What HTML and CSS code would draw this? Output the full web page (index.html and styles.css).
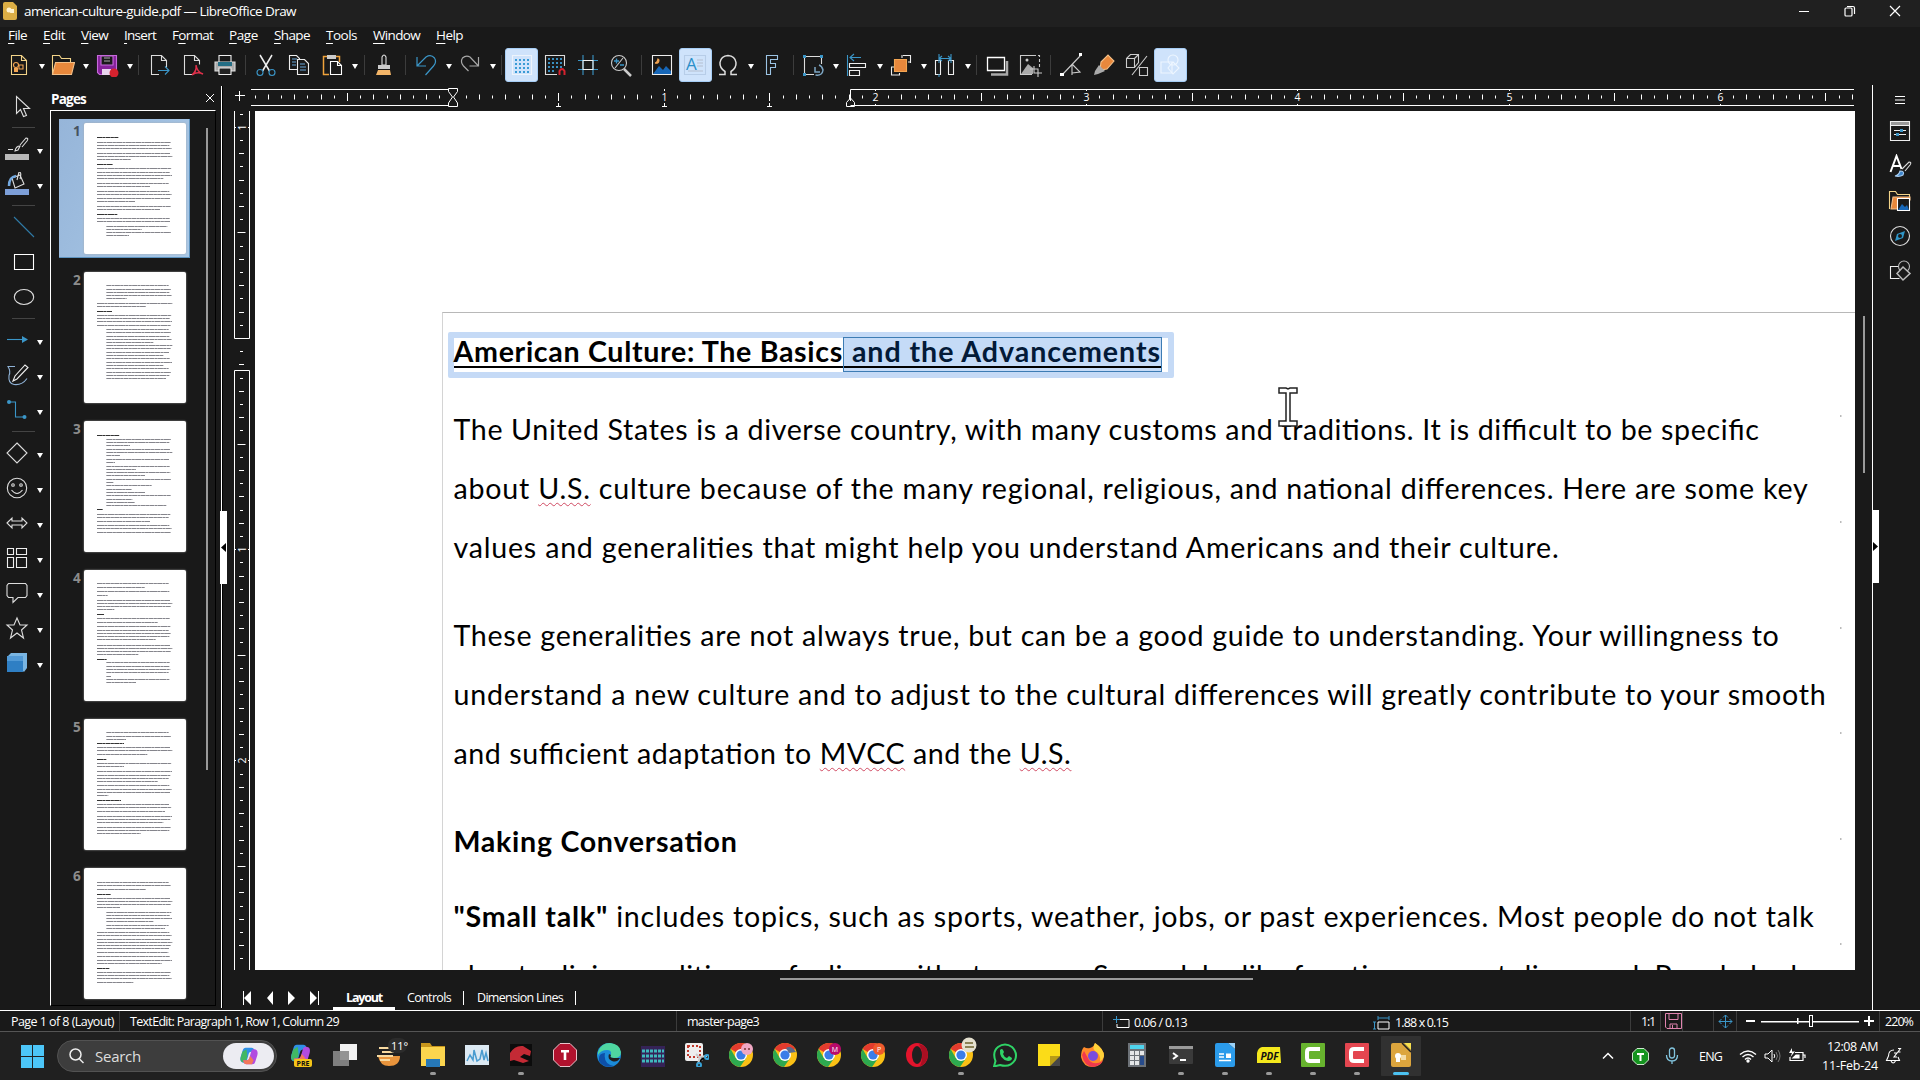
FILE: index.html
```html
<!DOCTYPE html>
<html lang="en">
<head>
<meta charset="utf-8">
<title>american-culture-guide.pdf — LibreOffice Draw</title>
<link rel="stylesheet" href="styles.css">
</head>
<body>
<svg class="defs" width="0" height="0">
  <symbol id="chrome" viewBox="0 0 24 24"><circle cx="12" cy="12" r="12" fill="#fbc116"/><path d="M12 12 1.6 6A12 12 0 0 1 22.4 6z" fill="#e33b2e"/><path d="M1.6 6A12 12 0 0 0 11 24L17.2 15 12 12 6.8 15z" fill="#2da94f"/><circle cx="12" cy="12" r="6" fill="#fff"/><circle cx="12" cy="12" r="4.6" fill="#3b7de8"/></symbol>
  <symbol id="copilot" viewBox="0 0 24 24"><path d="M8 2h7c2 0 3 1 3.500 3l.5 2h-4c-2 0-3 1-3.500 3L9.500 17c-.6 2-1.500 3-3.500 3C2 20 1 17 2 13L4.500 5C5.200 3 6 2 8 2z" fill="#2f8fe8"/><path d="M4 7 9 4l1 9-2 6c-4 2-7-1-6-5z" fill="#41b864"/><path d="M16 22H9c-2 0-3-1-3.500-3L5 17h4c2 0 3-1 3.500-3L14.500 7c.6-2 1.500-3 3.500-3 4 0 5 3 4 7l-2.500 8c-.7 2-1.500 3-3.500 3z" fill="#b14be0"/><path d="M5 17h4c2 0 3-1 3.500-3l1-2 4 5-2 5H9c-2 0-3-1-3.500-3z" fill="#f2775a"/></symbol>
</svg>

<header class="title"><svg width="15" height="20" viewBox="0 0 15 20"><path d="M2 1h8l4 4v12a2 2 0 0 1-2 2H2a2 2 0 0 1-2-2V3a2 2 0 0 1 2-2z" fill="#dcae45"/><circle cx="6" cy="9" r="2.500" fill="#fff3d0"/><path d="M8 8h3v4H7z" fill="#fff3d0"/></svg><span class="fit" data-w="272">american-culture-guide.pdf — LibreOffice Draw</span>
<svg class="winbtns" width="110" height="20" viewBox="0 0 110 20" fill="none" stroke="#fff" stroke-width="1.200"><path d="M3 10.500h10M94 5l10 10M104 5 94 15"/><rect x="49" y="7" width="7" height="8" rx="1"/><path d="M51 5.500h6q1.500 0 1.500 1.500v6"/></svg></header>

<nav class="menu"><span class="fit" data-w="19"><u>F</u>ile</span><span class="fit" data-w="22"><u>E</u>dit</span><span class="fit" data-w="27"><u>V</u>iew</span><span class="fit" data-w="32"><u>I</u>nsert</span><span class="fit" data-w="41">F<u>o</u>rmat</span><span class="fit" data-w="29"><u>P</u>age</span><span class="fit" data-w="36"><u>S</u>hape</span><span class="fit" data-w="31"><u>T</u>ools</span><span class="fit" data-w="47"><u>W</u>indow</span><span class="fit" data-w="27"><u>H</u>elp</span></nav>

<div class="tools">
 <i class="t"><svg viewBox="0 0 24 24"><path d="M4.500 2.500h10l5 5v14h-15z M14.500 2.500v5h5" stroke="#f3d489"/><circle cx="9" cy="12" r="2.500" stroke="#f3a552"/><path d="M12 12h4v4h-4z" stroke="#f3a552"/><path d="M7 19v-4h4v4z" fill="#f3a552" stroke="none"/></svg></i><i class="a"></i>
 <i class="t"><svg viewBox="0 0 24 24"><path d="M1.500 21V2.500h7l2 3h9v4" stroke="#f3d489"/><path d="M1.500 21.500 4.500 9.500h19l-3 12z" fill="#e8883c" stroke="#f3c089"/></svg></i><i class="a"></i>
 <i class="t"><svg viewBox="0 0 24 24"><path d="M2.500 2.500h19v19h-17l-2-2z" fill="#86229b" stroke="#c66adb"/><path d="M6 3h12v9H6z" fill="#1a1a1a" stroke="#c66adb"/><path d="M7 22v-6h9v6" fill="#e9d5ee" stroke="none"/><path d="M9 5h6M9 8h6" stroke="#aaa"/><circle cx="19" cy="20" r="4.500" fill="#d5222e" stroke="none"/></svg></i><i class="a"></i><i class="s"></i>
 <i class="t"><svg viewBox="0 0 24 24"><path d="M12 21.500H4.500v-19h10l5 5v7M14.500 2.500v5h5" stroke="#ddd"/><path d="M11 17.500h11M18 13.500l4 4-4 4" stroke="#3b96c8"/></svg></i>
 <i class="t"><svg viewBox="0 0 24 24"><path d="M12 21.500H4.500v-19h10l5 5v4M14.500 2.500v5h5" stroke="#ddd"/><path d="M12 22q5-4 4-10 1 7 7 9-6-3-11 1z" stroke="#e0304a" stroke-width="1.500"/></svg></i>
 <i class="t"><svg viewBox="0 0 24 24"><path d="M6 10V2.500h12V10" stroke="#eee"/><path d="M2 9h20v9H2z" fill="#aaa" stroke="#ddd"/><path d="M5 9h14v4H5z" fill="#246e85" stroke="none"/><path d="M6 15h12v6.500H6z" fill="#222" stroke="#eee"/></svg></i><i class="s"></i>
 <i class="t"><svg viewBox="0 0 24 24"><path d="M6 2 15.500 18M18 2 8.500 18" stroke="#eee" stroke-width="1.500"/><circle cx="6" cy="19.500" r="3" stroke="#3b96c8"/><circle cx="18" cy="19.500" r="3" stroke="#3b96c8"/></svg></i>
 <i class="t"><svg viewBox="0 0 24 24"><path d="M10 16.500H2.500v-14h7l3 3v2" stroke="#eee"/><path d="M10.500 6.500h7l4 4v11h-11z" fill="#1a1a1a" stroke="#eee"/><path d="M5 6h5M5 9h4M5 12h4M13 11h5M13 14h6M13 17h6" stroke="#68a5d8"/></svg></i>
 <i class="t"><svg viewBox="0 0 24 24"><path d="M9 21.500H3.500v-18h16V9" stroke="#f0a33c" stroke-width="1.500"/><path d="M7 2h9v4H7z" fill="#ccc" stroke="none"/><path d="M10.500 8.500h7l4 4v9h-11zM17.500 8.500v4h4" fill="#1a1a1a" stroke="#fff"/></svg></i><i class="a"></i><i class="s"></i>
 <i class="t"><svg viewBox="0 0 24 24"><path d="M10 12V4q2-4 4 0v8z" stroke="#ddd"/><path d="M6 12h12v4H6z" fill="#ccc" stroke="none"/><path d="M6 17h12l1 5H4z" fill="#f3b568" stroke="none"/></svg></i><i class="s"></i>
 <i class="t"><svg viewBox="0 0 24 24"><path d="M3 4v9h9M3.500 12.500 12 4q5-3 8.500 1 2.500 4-1 8l-8 9" stroke="#3b96c8" stroke-width="1.200"/></svg></i><i class="a"></i>
 <i class="t"><svg viewBox="0 0 24 24"><path d="M20.500 4v9h-9M20 12.500 12 4Q8 2 4.500 5q-2.500 4 1 8l5 5" stroke="#a8a8a8" stroke-width="1.200"/></svg></i><i class="a"></i><i class="s"></i>
 <i class="t on"><svg viewBox="0 0 24 24"><path d="M2.500 2.500h19v19h-19z" stroke="#eef4fb"/><path d="M5 7h15M5 11h15M5 15h15M5 19h15" stroke="#3a9bd5" stroke-width="2" stroke-dasharray="2 2"/></svg></i>
 <i class="t"><svg viewBox="0 0 24 24"><path d="M14 21.500H2.500v-19h19V13" stroke="#ddd"/><path d="M5 6h14M5 10h14M5 14h14M5 18h8" stroke="#3a8fc0" stroke-width="2" stroke-dasharray="2 2"/><path d="M16.500 22v-4q2.500-4 5 0v4" stroke="#d5222e" stroke-width="2"/></svg></i>
 <i class="t"><svg viewBox="0 0 24 24"><path d="M2 7.500h20M2 16.500h20M7 2v20M17 2v20" stroke="#3b96c8"/><path d="M7 7.500h10v9H7z" stroke="#eee"/></svg></i>
 <i class="t"><svg viewBox="0 0 24 24"><circle cx="10" cy="10" r="7.500" stroke="#ccc"/><path d="m15 16 7 7" stroke="#ccc" stroke-width="2.500"/><path d="M5 8h5M7.500 5.500v5M11 12h4" stroke="#3b96c8" stroke-width="1.400"/><path d="m14 5-8 10" stroke="#ccc"/></svg></i><i class="s"></i>
 <i class="t"><svg viewBox="0 0 24 24"><path d="M2.500 2.500h19v19h-19z" stroke="#eee"/><path d="m3 21 6-8 4 4 3-4 5 5v3z" fill="#1767b8" stroke="none"/><path d="M8 6q-1 4-3 4 4 1 4-3z" fill="#f3a552" stroke="#f3a552"/></svg></i>
 <i class="t on"><svg viewBox="0 0 24 24"><path d="M1.500 2.500h21v19h-21z" stroke="#b7cde8"/><path d="M14 7h6M14 10h6M14 13h6M5 18h15" stroke="#b5c0d0"/><text x="3" y="17" class="ico-a">A</text></svg></i>
 <i class="t"><svg viewBox="0 0 24 24"><path d="M3 21.500h6v-3Q3.500 15 4 9.500 5 3 12 2.500q7 .5 8 7 .5 5.500-5 9v3h6" stroke="#ddd" stroke-width="1.500"/></svg></i><i class="a"></i>
 <i class="t"><svg viewBox="0 0 24 24"><path d="M6.500 2.500h11v4h-7v4h5v4h-5v7h-4z" stroke="#9cc4e4"/></svg></i><i class="s"></i>
 <i class="t"><svg viewBox="0 0 24 24"><path d="M13 21.500H3.500v-18h17V11" stroke="#ddd"/><path d="M2 2h3v3H2zM19 2h3v3h-3zM2 20h3v3H2z" fill="#3b96c8" stroke="none"/><path d="M14 14v5h5M14.500 22q7 1 7.500-5-1-4-4-5" stroke="#7da6c4" stroke-width="1.500"/></svg></i><i class="a"></i>
 <i class="t"><svg viewBox="0 0 24 24"><path d="M2.500 2v21M5 4.500h11M9 1 5 4.500 9 8" stroke="#3b96c8"/><path d="M4.500 10.500h16v4h-16zM4.500 17.500h10v5h-10z" stroke="#eee"/></svg></i><i class="a"></i>
 <i class="t"><svg viewBox="0 0 24 24"><path d="M14 2.500h7.500V10M2.500 14v8h8V20M13 2v3M22 9h-3M2 14h3" stroke="#eee"/><path d="M5.500 6.500h12v12h-12z" fill="#e8883c" stroke="#f3a552"/></svg></i><i class="a"></i>
 <i class="t"><svg viewBox="0 0 24 24"><path d="M2.500 7.500h5v14h-5zM15.500 7.500h5v14h-5z" stroke="#eee"/><path d="M6 1v9M18 1v9M6 5.500h12M9 3 6 5.500 9 8M15 3l3 2.500L15 8M6 21v3" stroke="#3b96c8"/></svg></i><i class="a"></i><i class="s"></i>
 <i class="t"><svg viewBox="0 0 24 24"><path d="M22 8v13.500H6" stroke="#aaa" stroke-width="2.500"/><path d="M2.500 4.500h17v13h-17z" stroke="#fff" stroke-width="1.300"/></svg></i>
 <i class="t"><svg viewBox="0 0 24 24"><path d="M3 21.500h11M2.500 22V2.500H15" stroke="#ccc"/><path d="m3 21 7-10 5 4v6z" fill="#aaa" stroke="none"/><circle cx="9" cy="7" r="1.500" fill="#ccc" stroke="none"/><path d="M15 2.500h6.500V15" stroke="#ccc" stroke-dasharray="3 2"/><path d="M16 13v7h8M12 16h8v8" stroke="#ccc"/></svg></i><i class="s"></i>
 <i class="t"><svg viewBox="0 0 24 24"><path d="M3 22 22 2M13 11v11M13 11l8 8-8 1" stroke="#ccc"/><path d="M1 20h4v3H1zM20 0h3v3h-3z" fill="#fff" stroke="none"/></svg></i>
 <i class="t"><svg viewBox="0 0 24 24"><path d="m9 9 7-7 6 6-7 8-7 1z" fill="#e8883c" stroke="#f3c089"/><path d="m7 12 6 6-7 3-4 1 1-4z" fill="#aaa" stroke="none"/></svg></i>
 <i class="t"><svg viewBox="0 0 24 24"><path d="M1.500 5.500h8v9h-8zM1.500 5.500l4-4h8v8l-4 5M9.500 5.500l4-4M14.500 14.500h8v8h-8zM22 3 7 22" stroke="#ccc"/></svg></i>
 <i class="t on"><svg viewBox="0 0 24 24"><path d="M3 9h11v11H3z" stroke="#eef6ff"/><circle cx="15" cy="7" r="5" stroke="#eef6ff"/><path d="m15 9 6 6-6 6-5-6z" stroke="#eef6ff"/></svg></i>
</div>

<main class="work">
 <aside class="left">
  <i class="l ind sel-tool"><svg viewBox="0 0 24 24"><path d="M7.500 2.500v17l4-4 3 7 3-1-3-7h6z" stroke="#ddd"/></svg></i>
  <i class="hs"></i>
  <i class="l arr"><svg viewBox="0 0 24 24"><path d="M3 12.500h5M10 14q1-5 5-5l-2 4zM15 8l6-7q3 0 1 3l-5 6" stroke="#ddd"/><path d="M0 17h24v6H0z" fill="#b9b9b9" stroke="none"/></svg></i>
  <i class="l arr"><svg viewBox="0 0 24 24"><path d="m7 6 8-3 4 9-9 4zM12 8l2-8q3 0 1 7" stroke="#ddd"/><path d="M4 14q0-9 7-10" stroke="#73a9e0" stroke-width="2.500"/><path d="M0 17h24v6H0z" fill="#7d9fd8" stroke="none"/></svg></i>
  <i class="hs"></i>
  <i class="l ind"><svg viewBox="0 0 24 24"><path d="m2 2 20 20" stroke="#2f7ba8"/></svg></i>
  <i class="l ind"><svg viewBox="0 0 24 24"><path d="M2.500 4.500h19v15h-19z" stroke="#fff"/></svg></i>
  <i class="l ind"><svg viewBox="0 0 24 24"><ellipse cx="12" cy="12" rx="9.700" ry="7.500" stroke="#ddd"/></svg></i>
  <i class="hs"></i>
  <i class="l arr"><svg viewBox="0 0 24 24"><path d="M2 11.500h17" stroke="#3b96c8"/><path d="m17 8 6 3.500-6 3.500z" fill="#3b96c8" stroke="none"/></svg></i>
  <i class="l arr"><svg viewBox="0 0 24 24"><path d="M10 3.500H3q3 5 1 9-1 8 5 9 8 1 13-6" stroke="#8fb2d6"/><path d="m8 18 2-5L20 2l3 2.500L12 16z" stroke="#eee"/></svg></i>
  <i class="l arr"><svg viewBox="0 0 24 24"><path d="M4 4h6.500v15H19" stroke="#3b96c8"/><circle cx="4" cy="4" r="2" fill="#3b96c8" stroke="none"/><circle cx="19.500" cy="19" r="2" fill="#3b96c8" stroke="none"/></svg></i>
  <i class="hs"></i>
  <i class="l arr"><svg viewBox="0 0 24 24"><path d="m12 2 10 10-10 10L2 12z" stroke="#ddd"/></svg></i>
  <i class="l arr"><svg viewBox="0 0 24 24"><circle cx="12" cy="12" r="9.700" stroke="#ddd"/><circle cx="8" cy="9" r="1.300" stroke="#ddd"/><circle cx="16" cy="9" r="1.300" stroke="#ddd"/><path d="M6.500 14q5.500 7 11 0" stroke="#ddd"/></svg></i>
  <i class="l arr"><svg viewBox="0 0 24 24"><path d="m2 12 5-5v3h10V7l5 5-5 5v-3H7v3z" stroke="#ddd"/></svg></i>
  <i class="l arr"><svg viewBox="0 0 24 24"><path d="M2.500 2.500h6v6h-6zM11.500 2.500h10v6h-10zM2.500 11.500h6v10h-6zM11.500 11.500h10v10h-10z" stroke="#eee"/></svg></i>
  <i class="l arr"><svg viewBox="0 0 24 24"><path d="M3.500 2.500h17l1.500 2v10l-1.500 2H13l-5 5v-5H3.500l-1.500-2v-10z" stroke="#ddd"/></svg></i>
  <i class="l arr"><svg viewBox="0 0 24 24"><path d="m12 2 3 7h7l-5.500 5 2 8-6.500-5-6.500 5 2-8L2 9h7z" stroke="#ddd"/></svg></i>
  <i class="l arr"><svg viewBox="0 0 24 24"><path d="m2 6 4-4h16v15l-3 4z" fill="#79b5e2" stroke="none"/><path d="M2 5h16v16H2z" fill="#2f7fc4" stroke="none"/><path d="M2 5h16v5H2z" fill="#529ad6" stroke="none"/></svg></i>
 </aside>

 <section class="pages">
  <div class="pages-head"><b class="fit" data-w="35">Pages</b><svg width="10" height="10" viewBox="0 0 10 10" stroke="#fff"><path d="m1 1 8 8M9 1 1 9"/></svg></div>
  <div class="thumbs" id="thumbs"></div>
  <i class="psb"></i>
 </section>
 <div class="split"><i class="grip"><svg width="7" height="10" viewBox="0 0 7 10"><path d="M6 0v9L1 4.500z" fill="#000"/></svg></i></div>

 <section class="editor">
  <svg class="ruler-h" id="rh" width="1621" height="26"></svg>
  <div class="mid">
   <svg class="ruler-v" id="rv" width="22" height="859"></svg>
   <div class="canvas">
    <div class="paper">
     <div class="hbox"><h1><span class="fit" data-w="389.500">American Culture: The Basics</span><span class="sel"><span class="fit" data-w="317"> and the Advancements</span></span></h1></div>
     <p class="p1"><span class="fit" data-w="1306">The United States is a diverse country, with many customs and traditions. It is difficult to be specific</span></p>
     <p><span class="fit" data-w="1355">about <s>U.S.</s> culture because of the many regional, religious, and national differences. Here are some key</span></p>
     <p><span class="fit" data-w="1106">values and generalities that might help you understand Americans and their culture.</span></p>
     <p class="gap"><span class="fit" data-w="1326">These generalities are not always true, but can be a good guide to understanding. Your willingness to</span></p>
     <p><span class="fit" data-w="1373">understand a new culture and to adjust to the cultural differences will greatly contribute to your smooth</span></p>
     <p><span class="fit" data-w="618">and sufficient adaptation to <s>MVCC</s> and the <s>U.S.</s></span></p>
     <p class="gap"><b class="fit" data-w="284">Making Conversation</b></p>
     <p class="talk"><span class="fit" data-w="1361"><b>"Small talk"</b> includes topics, such as sports, weather, jobs, or past experiences. Most people do not talk</span></p>
     <p><span class="fit" data-w="1344">about religion, politics, or feelings with strangers. Second, be like function or most discussed. People had</span></p>
    </div>
    <svg class="dots" width="4" height="540" viewBox="0 0 4 540"><path d="M0 1h1.500M0 107h1.500M0 213h1.500M0 318h1.500M0 424h1.500M0 529h1.500" stroke="#777"/></svg>
    <svg class="beam" width="20" height="40" viewBox="0 0 20 40"><path d="M1 1h7l2 1 2-1h7v5h-7v28h7v5H1v-5h7V6H1z" fill="#fff" stroke="#222" stroke-width="1.500"/></svg>
   </div>
   <i class="vsb"></i>
  </div>
  <i class="hsb"></i>
  <div class="tabs">
   <svg width="80" height="16" viewBox="0 0 80 16" fill="#fff"><path d="M1 1h1v14H1zM9 1v14L2 8zM31 1v14l-6-7zM46 1v14l7-7zM68 1v14l7-7zM76 1h1v14h-1z"/></svg>
   <b class="tab"><span class="fit" data-w="36">Layout</span></b>
   <span class="tab2"><span class="fit" data-w="44">Controls</span></span>
   <span class="tab3"><span class="fit" data-w="86">Dimension Lines</span></span>
  </div>
 </section>
 <div class="split r"><i class="grip"><svg width="7" height="10" viewBox="0 0 7 10"><path d="M1 0v9l5-4.500z" fill="#000"/></svg></i></div>
 <aside class="right">
  <i><svg viewBox="0 0 24 24"><path d="M7 8.500h10M7 12h10M7 15.500h10" stroke="#fff"/></svg></i>
  <i><svg viewBox="0 0 24 24"><path d="M2.500 2.500h19v19h-19z" stroke="#eee"/><path d="M3 3h18v3H3z" fill="#999" stroke="none"/><path d="M3 6.500h18M6 11.500h12M6 15.500h12" stroke="#eee"/><path d="M12 10h3v3h-3zM8 14h3v3H8z" fill="#3b96c8" stroke="none"/></svg></i>
  <i><svg viewBox="0 0 24 24"><path d="M2.500 18 8.500 2l5 13M5 12h7" stroke="#fff" stroke-width="2"/><path d="m14 15 7-7q3 0 1 3l-5 6" stroke="#ddd"/><path d="M7 22q4-1 5-5 5 0 3 4-3 2-8 1z" fill="#3f86cc" stroke="#a8cdf0"/></svg></i>
  <i><svg viewBox="0 0 24 24"><path d="M1.500 20V2.500h6l2 3h12V9" stroke="#f3d489"/><path d="M3 20 5 8h17v3H10v9z" fill="#e8883c" stroke="#f3c089"/><path d="M9.500 9.500h12v12h-12z" fill="#1a1a1a" stroke="#fff"/><path d="m10 21 4-6 3 3 2-2 2 5z" fill="#1767b8" stroke="none"/></svg></i>
  <i><svg viewBox="0 0 24 24"><circle cx="12" cy="12" r="9.500" stroke="#ddd"/><path d="m17 7-2 7-8 3 2-7z" fill="#2f96c8" stroke="none"/><circle cx="12" cy="12" r="2" fill="#1a1a1a" stroke="none"/></svg></i>
  <i><svg viewBox="0 0 24 24"><path d="M10 7.500H2.500v12h9" stroke="#eee"/><circle cx="16" cy="7.500" r="5.500" stroke="#bbb"/><path d="m15 8 7 6.500-7 6.500-6-6.500z" fill="#1a1a1a" stroke="#bbb" stroke-width="1.500"/></svg></i>
 </aside>
</main>

<footer class="status">
 <span><span class="fit" data-w="103">Page 1 of 8 (Layout)</span></span>
 <span class="bl"><span class="fit" data-w="209">TextEdit: Paragraph 1, Row 1, Column 29</span></span>
 <span class="bl"><span class="fit" data-w="72">master-page3</span></span>
 <span class="bl lo"><svg width="17" height="16" viewBox="0 0 17 16" fill="none"><path d="M5 4.500h11v8H4V9" stroke="#fff"/><path d="M0 4.500h7M3.500 1v7" stroke="#3b96c8"/></svg><span class="fit" data-w="53">0.06 / 0.13</span></span>
 <span class="lo"><svg width="18" height="16" viewBox="0 0 18 16" fill="none"><path d="M5 7h11v7H5z" stroke="#fff"/><path d="M5 3h11M5 1v4M16 1v4M1.500 7v7M0 7h3M0 14h3" stroke="#3b96c8"/></svg><span class="fit" data-w="53">1.88 x 0.15</span></span>
 <span class="bl"><span class="fit" data-w="14">1:1</span></span>
 <span class="bl ic"><svg width="17" height="18" viewBox="0 0 17 18" fill="none" stroke="#df83ae"><path d="M.5 1.500h16v15H2l-1.500-1.500zM4 1.500h9v6H4zM5 16v-4h7v4M7.500 13v3"/></svg></span>
 <span class="bl"></span>
 <span class="bl ic"><svg width="15" height="15" viewBox="0 0 15 15" fill="none" stroke="#3b96c8"><path d="M7.500 1v13M1 7.500h13M5 3.500 7.500 1 10 3.500M5 11.500 7.500 14l2.500-2.500M3.500 5 1 7.500 3.500 10M11.500 5 14 7.500 11.500 10"/></svg></span>
 <span class="bl zoom"><svg width="130" height="16" viewBox="0 0 130 16" fill="#fff"><path d="M0 7h9v2H0zM15 8h98v1.500H15zM51 5h1.500v6H51zM118 7h10v2h-10zM122 3h2v10h-2z"/><rect x="63.500" y="2.500" width="3" height="11" fill="#1a1a1a" stroke="#fff"/></svg></span>
 <span class="bl z"><span class="fit" data-w="28">220%</span></span>
</footer>

<footer class="taskbar">
 <svg class="win" viewBox="0 0 24 24"><path d="M0 0h11.500v11.500H0zM12.500 0H24v11.500H12.500zM0 12.500h11.500V24H0zM12.500 12.500H24V24H12.500z" fill="#4cc6f8"/></svg>
 <div class="search"><svg width="18" height="18" viewBox="0 0 18 18" fill="none" stroke="#eee" stroke-width="1.500"><circle cx="7.500" cy="7.500" r="5.500"/><path d="m11.500 12 4 4"/></svg><span class="fit" data-w="46">Search</span><i><svg width="20" height="20"><use href="#copilot"/></svg></i></div>
 <div class="apps">
  <i><svg viewBox="0 0 24 24"><use href="#copilot" width="23" height="22"/><rect x="5" y="16" width="18" height="8" rx="2" fill="#f5c518"/><text x="14" y="22.500" class="pre">PRE</text></svg></i>
  <i><svg viewBox="0 0 24 24"><path d="M7 1h17v16H7z" fill="#f2f2f2"/><path d="M0 8h16v15H0z" fill="#8a8a8a" opacity=".9"/></svg></i>
  <i><svg viewBox="0 0 24 24" overflow="visible"><path d="M1 13h22q0 10-11 10Q3 23 1 13z" fill="#e8943c"/><path d="M2 5h12M5 9h12M0 13h16M3 17h10" stroke="#f7d9a0" stroke-width="2"/><rect x="11" y="-5" width="19" height="15" rx="7" fill="#2c2c2c"/><text x="14" y="7" class="temp">11°</text></svg></i>
  <i class="run"><svg viewBox="0 0 24 24"><path d="M0 0h9l2 3h13v19H0z" fill="#c8961c"/><path d="M0 4h24v19H0z" fill="#fbd54e"/><path d="M5 16h14v8H5z" fill="#2678b8"/></svg></i>
  <i><svg viewBox="0 0 24 24"><path d="M0 2h24v20H0z" fill="#dce9f3"/><path d="m2 18 3-6 3 5 1-10 3 11 3-2 2-9 2 10 2-7 2 8" fill="none" stroke="#4a9cd0" stroke-width="1.500"/></svg></i>
  <i class="run"><svg viewBox="0 0 24 24"><path d="M1 1h22v22H1z" fill="#0c0c0c"/><path d="M1 10q5-8 13-7l8 5-1 5-6-2-4 3 9 4-6 2-9-3-4 1z" fill="#c42a35"/></svg></i>
  <i><svg viewBox="0 0 24 24"><path d="M7 .500h10L23.500 7v10L17 23.500H7L.5 17V7z" fill="#b0122e" stroke="#e9c4cb"/><path d="M8 7h8v2.500h-2.700V17h-2.600V9.500H8z" fill="#fff"/></svg></i>
  <i><svg viewBox="0 0 24 24"><circle cx="12" cy="12" r="12" fill="#1b8bd8"/><path d="M1 9Q4 0 13 0q10 1 11 9 0 6-7 6-5 0-3-3 1-5-4-5-6 0-9 5z" fill="#4fd6a0"/><path d="M8 10q-2 11 9 13-10 3-15-5Q1 10 8 10z" fill="#0d4fa8"/><path d="M14 12q-2 3 3 3h6q-3 5-8 3-5-2-3-7z" fill="#202020"/></svg></i>
  <i><svg viewBox="0 0 24 24"><path d="M0 3h24v21H0z" fill="#352357"/><path d="M1 8h22M1 13h22M1 18h22" stroke="#3fb9bd" stroke-width="3" stroke-dasharray="3 1"/></svg></i>
  <i><svg viewBox="0 0 24 24"><rect x="0" y="0" width="18" height="18" rx="2" fill="#eee"/><path d="M3 3h12v11H3z" fill="none" stroke="#c0392b" stroke-width="2" stroke-dasharray="2 2"/><path d="m11 11 5 5M13 21l2-7 7-1" stroke="#ccc" stroke-width="2"/><circle cx="14" cy="22" r="2" fill="none" stroke="#38a3d8" stroke-width="2"/><circle cx="22" cy="14" r="2" fill="none" stroke="#38a3d8" stroke-width="2"/></svg></i>
  <i><svg viewBox="0 0 24 24"><use href="#chrome"/><circle cx="18" cy="6" r="6" fill="#f0a8c4"/><path d="M15 6h2M19 6h2" stroke="#733" stroke-width="1.500"/></svg></i>
  <i><svg viewBox="0 0 24 24"><use href="#chrome"/><path d="M13 5q5-3 10 4l-7 1z" fill="#586a8c"/></svg></i>
  <i><svg viewBox="0 0 24 24"><use href="#chrome"/><circle cx="18" cy="6" r="6" fill="#b80a6b"/><text x="18" y="8.500" class="bdg">M</text></svg></i>
  <i><svg viewBox="0 0 24 24"><use href="#chrome"/><circle cx="18" cy="6" r="6" fill="#ef5a2c"/><text x="18" y="8.500" class="bdg">P</text></svg></i>
  <i><svg viewBox="0 0 24 24"><ellipse cx="12" cy="12" rx="11" ry="12" fill="#e3142c"/><path d="M14 1q9 2 9 11-1 9-8 11 5-11-1-22z" fill="#a90f22"/><ellipse cx="12" cy="12" rx="5" ry="9" fill="#202020"/></svg></i>
  <i class="run"><svg viewBox="0 0 24 24" overflow="visible"><use href="#chrome"/><circle cx="20" cy="2" r="7.500" fill="#e4e0cf"/><path d="M16 0h8M16 4h9" stroke="#8c8256" stroke-width="2"/></svg></i>
  <i><svg viewBox="0 0 24 24"><path d="M1 23.500 2.500 18Q-1 9 5 4 12-1 19 4q6 6 3 13-5 8-15 5z" fill="#202020" stroke="#2fd366" stroke-width="2"/><path d="M7 7q2-2 3 0l1 2-1 2q1 3 4 4l2-2 3 2q0 3-4 3Q6 16 7 7z" fill="#2fd366"/></svg></i>
  <i><svg viewBox="0 0 24 24"><path d="M1 1h22v12L13 23H1z" fill="#fbdc18"/><path d="M23 13v10H13z" fill="#474747"/><path d="M13 23V13h10z" fill="#b89c17"/></svg></i>
  <i><svg viewBox="0 0 24 24"><path d="M3 4q3 2 6 1 4-1 5-5 9 6 9 13-1 10-11 11Q2 24 0 14 0 7 3 4z" fill="#ff8a2a"/><path d="M14 0q9 6 9 13-1 4-4 5 1-7-5-10-3-3 0-8z" fill="#ffd23a"/><path d="M1 12q2 11 11 12 7-1 10-6-9 5-14-1L3 8z" fill="#f0394e"/><circle cx="12" cy="13" r="5" fill="#7a4ce0"/></svg></i>
  <i><svg viewBox="0 0 24 24"><path d="M3 0h18v24H3z" fill="#6d7278"/><path d="M5 2h14v4H5z" fill="#4fd4ee"/><path d="M5 8h4v4H5zM10 8h4v4h-4zM15 8h4v4h-4zM5 13h4v4H5zM10 13h4v4h-4zM5 18h4v4H5zM10 18h4v4h-4z" fill="#e4e6e8"/><path d="M15 13h4v9h-4z" fill="#274b8b"/></svg></i>
  <i class="run"><svg viewBox="0 0 24 24"><rect y="3" width="24" height="18" rx="1" fill="#3a3a3a"/><path d="M0 3h24v3H0z" fill="#999"/><path d="m4 10 4 3-4 3M11 17h6" stroke="#fff" stroke-width="2" fill="none"/></svg></i>
  <i class="run"><svg viewBox="0 0 24 24"><path d="M4 0h11l7 6v16q0 2-2 2H4q-2 0-2-2V2q0-2 2-2z" fill="#2b9bea"/><path d="M15 0h7v6z" fill="#9bd2f8"/><path d="M6 11h5M6 14h5M6 17.500h12" stroke="#fff" stroke-width="1.300"/><path d="M13 10.500h5v4.500h-5z" fill="#fff"/></svg></i>
  <i class="run"><svg viewBox="0 0 24 24"><path d="M5 4h18l1 16H0V10q1-5 5-6z" fill="#f4e81c"/><text x="12.500" y="16.500" class="pdf">PDF</text></svg></i>
  <i class="run"><svg viewBox="0 0 24 24"><rect width="24" height="24" rx="1" fill="#67b32e"/><path d="M19 6H9Q6 6 6 9v6q0 3 3 3h10" fill="none" stroke="#fff" stroke-width="4"/></svg></i>
  <i class="run"><svg viewBox="0 0 24 24"><rect width="24" height="24" rx="1" fill="#e44650"/><path d="M19 6H9Q6 6 6 9v6q0 3 3 3h10" fill="none" stroke="#fff" stroke-width="4"/></svg></i>
  <i class="run act"><svg viewBox="0 0 24 24"><path d="M4 0h11l7 7v15q0 2-2 2H4q-2 0-2-2V2q0-2 2-2z" fill="#dca53d"/><path d="M15 0h7v7z" fill="#f7e04e"/><path d="m13 0 9 9" stroke="#222" stroke-width="1.500"/><circle cx="9" cy="13" r="3" fill="#fff"/><path d="M12 12h5v5h-5z" fill="#f4dca5"/><path d="M7 15h4v4H7z" fill="#fff"/></svg></i>
 </div>
 <div class="tray">
  <svg width="12" height="24" viewBox="0 0 12 24" fill="none" stroke="#fff" stroke-width="1.500"><path d="m1 14.500 5-5 5 5"/></svg>
  <svg width="17" height="17" viewBox="0 0 17 17"><path d="M5 .500h7L16.500 5v7L12 16.500H5L.5 12V5z" fill="#15941f" stroke="#cfe8d1"/><path d="M5 5h7v2H9.500v6h-2V7H5z" fill="#fff"/></svg>
  <svg width="14" height="18" viewBox="0 0 14 18" fill="none" stroke="#82c4dd" stroke-width="1.300"><rect x="4.500" y="1" width="5" height="10" rx="2.500"/><path d="M1.500 8q0 6 5.500 6t5.500-6M7 14v3"/></svg>
  <span class="eng"><span class="fit" data-w="23">ENG</span></span>
  <svg width="18" height="14" viewBox="0 0 18 14" fill="none" stroke="#fff" stroke-width="1.400"><path d="M1 5.500q8-7 16 0M3.500 8q5.500-5 11 0M6 10.500q3-3 6 0"/><circle cx="9" cy="12" r="1" fill="#fff"/></svg>
  <svg width="17" height="14" viewBox="0 0 17 14" fill="none" stroke="#fff"><path d="M1 5h3l4-4v12L4 9H1zM10 5q1.500 2 0 4"/><path d="M12 3q3 4 0 8M14 1q4 6 0 12" stroke="#777"/></svg>
  <svg width="18" height="16" viewBox="0 0 18 16" fill="none" stroke="#fff" stroke-width="1.200"><path d="M7 4.500h8v8H2V9M15.500 7h1.500v3"/><path d="M8 7h3v3H5z" fill="#fff"/><path d="m4 0-3 5h3L2.500 9 7 3.500H4z" fill="#fff" stroke="none"/></svg>
  <div class="clock"><span class="fit" data-w="51">12:08 AM</span><span class="fit" data-w="56">11-Feb-24</span></div>
  <svg width="17" height="18" viewBox="0 0 17 18" fill="none" stroke="#fff" stroke-width="1.100"><path d="M9 3Q3.500 3 3.500 9L1.500 13.500h13L13 10M6 14q2 4 4.500 0M9 6h3l-3 4h3M13 1.500h2.500L13 5h2.500"/></svg>
 </div>
</footer>
<script src="app.js"></script>
</body>
</html>
```
FILE: styles.css
```css
*{box-sizing:border-box}
body{margin:0;width:1920px;height:1080px;overflow:hidden;background:#191919;color:#fff;font:13.5px "Open Sans","Noto Sans",sans-serif;display:flex;flex-direction:column}
i{font-style:normal;display:block}
svg{display:block;flex:none}
.defs{position:absolute}
.fit{display:inline-block;white-space:pre}
.title{height:27px;background:#202020;display:flex;align-items:center;gap:6px;padding:0 14px 6px 3px;flex:none}
.title .winbtns{margin-left:auto}
.menu{height:31px;display:flex;align-items:center;gap:16px;padding:0 0 15px 8px;line-height:18px;flex:none}
.menu u{text-underline-offset:3px;text-decoration-thickness:1px}
.tools{height:27px;display:flex;align-items:center;padding-left:2.6px;margin-top:-7px;flex:none}
.t{width:33px;height:34px;display:flex;align-items:center;justify-content:center;border-radius:3px;flex:none}
.t svg,.left svg,.right svg{width:24px;height:24px;fill:none;stroke-width:1.1}
.t.on{background:#cfe3fb;border:1px solid #a6cdf5}
.ico-a{font:17px "Open Sans",sans-serif;fill:#2a8fc8;stroke:none}
.a{width:10.8px;height:34px;display:flex;align-items:center;justify-content:center;flex:none;padding-left:2px}
.a::after,.arr::after{content:"";border:3.5px solid transparent;border-top:5px solid #fff;border-bottom:0;margin-top:3px}
.s{height:20px;border-left:1px solid #3c3c3c;margin-left:4px;width:4.4px;flex:none}
.work{height:932px;display:flex;flex:none}
.left{width:50px;padding-top:10px}
.l{height:35px;display:flex;align-items:center;padding-left:5px}
.l.ind{padding-left:12px}
.l.sel-tool{padding-left:9px}
.arr::after{margin-left:7.5px;margin-top:6px}
.hs{height:8px;width:23px;padding-top:3px;margin-left:12px;background:linear-gradient(#444,#444) 0 4px/23px 1px no-repeat}
.pages{width:171px;position:relative;flex:none}
.pages-head{height:32px;display:flex;align-items:center;justify-content:space-between;padding:9px 6px 0 1px}
.pages-head svg{margin-top:-1px}
.thumbs{border-top:1px solid #fff;border-left:1px solid #fff;border-right:1px solid #000;border-bottom:1px solid #000;width:166px;height:896px;padding:8px 0 0 8px;overflow:hidden}
.th{height:139px;width:131px;display:flex;gap:4px;padding:4px 0 0 14px;margin-bottom:10px}
.th.cur{background:linear-gradient(115deg,#96b5d9,#a9c8e6);border-bottom:1px solid #5d93bf;border-right:1px solid #5d93bf}
.th b{width:8px;font:bold 13.5px/16px "Open Sans",sans-serif;color:#8c8c8c}
.th.cur b{color:#47525e}
.th svg{background:#fff;border-radius:2px;box-shadow:0 0 2px #aaa;overflow:hidden;margin-left:-1px}
.psb{position:absolute;left:156px;top:50px;width:2px;height:642px;background:#999}
.split{width:2px;height:922px;background:linear-gradient(90deg,#fff 1px,#000 1px);position:relative;margin-top:8px;flex:none}
.split .grip{position:absolute;left:-1px;top:425px;width:7px;height:73px;background:#fff;display:flex;align-items:center;z-index:2}
.split.r{height:925px;margin-top:7px;background:#fff;width:1px}
.split.r .grip{left:0}
.editor{width:1649px;padding-left:10px;flex:none;display:flex;flex-direction:column;height:932px}
.ruler-h{margin-top:7px}
.mid{display:flex;height:859px;flex:none}
.canvas{width:1600px;height:859px;background:#fff;overflow:hidden;position:relative;flex:none}
.paper{margin:201px 0 0 187px;border-top:1px solid #b8b8b8;border-left:1px solid #d4d4d4;height:700px;color:#000;font:28.6px/59.2px Lato,"Open Sans",sans-serif;font-feature-settings:"liga";padding-left:10.5px}
.paper p{margin:0;height:59.2px;white-space:nowrap}
.hbox{width:726px;height:46px;border:6px solid #c5daf6;margin:19px 0 0 -6px;border-radius:2px}
h1{margin:-1px 0 0;font-size:28.6px;line-height:29px;display:flex;height:36px}
h1 .fit{height:31px;border-bottom:2.5px solid #000}
.sel{background:#c5dbf7;color:#031a38;border:1px solid #3d7cb4;height:35px;width:319px;line-height:27px}
.sel .fit{height:30px}
.paper s{text-decoration:underline wavy #d04a62 1px;text-underline-offset:3px;text-decoration-skip-ink:none}
.paper .p1{margin-top:21.7px}
.paper .gap{margin-top:28.6px}
.paper .talk{margin-top:16px}
.dots{position:absolute;right:11px;top:304px}
.beam{position:absolute;left:1023px;top:276px}
.vsb{width:2px;height:157px;background:#999;margin:205px 0 0 8px}
.hsb{width:473px;height:2px;background:#999;margin:8px 0 0 547px;flex:none}
.tabs{height:30px;display:flex;align-items:flex-end;padding-left:9px;font-size:12.5px;flex:none}
.tabs svg{margin-bottom:4px}
.tab{height:24px;width:62px;border-bottom:3px solid #fff;margin-left:11px;padding-left:13px;line-height:23px}
.tab2,.tab3{padding:0 12px;border-right:1px solid #fff;line-height:14px;height:14px;margin-bottom:5px}
.tab3{padding:0 12px 0 13px}
.right{padding-top:8px;margin-left:15px;width:24px}
.right i{height:35px;display:flex;align-items:center}
.right i:first-child{height:27px}
.status{height:22px;border-top:1.5px solid #fff;border-bottom:1px solid #555;display:grid;grid-template-columns:119px 557px 426px 271px 257px 30px 22px 31px 23px 143px 41px;flex:none;font-size:12.5px;line-height:19px}
.status>span{padding-left:10px;display:flex;align-items:center;gap:4px;height:20px}
.status>span:first-child{padding-left:11px}
.status>.bl{border-left:1px solid #3c3c3c}
.status>span:nth-child(5){padding-left:0}
.status>.lo{padding-top:3px}
.status>.ic{padding-left:4px}
.status>.zoom{padding-left:9px}.status>.z{padding-left:5px}
.taskbar{height:48px;background:#202020;display:flex;align-items:center;flex:none;padding-left:21px}
.win{width:23px;height:23px}
.search{width:220px;height:32px;border-radius:16px;background:#3d3d3d;border:1px solid #525252;margin-left:13px;display:flex;align-items:center;padding-left:10px;font-size:15px;color:#ddd}
.search .fit{margin-left:9px}
.search i{margin-left:auto;margin-right:2px;width:51px;height:26px;border-radius:13px;background:#ececf2;display:flex;align-items:center;justify-content:center}
.apps{display:flex;margin-left:2px}
.apps i{width:44px;height:40px;display:flex;align-items:center;justify-content:center;position:relative;border-radius:4px;padding-bottom:2px}
.apps svg{width:24px;height:24px}
.run::after{content:"";position:absolute;left:19px;bottom:1px;width:6px;height:3px;border-radius:2px;background:#999}
.apps .act{background:linear-gradient(90deg,#202020 2px,#313131 2px,#313131 42px,#202020 42px)}
.act::after{background:#4cc2f1;left:14px;width:16px}
.pre{font:bold 7px "Open Sans",sans-serif;text-anchor:middle;fill:#111}
.temp{font:11px "Open Sans",sans-serif;fill:#fff}
.bdg{font:7px "Open Sans",sans-serif;fill:#fff;text-anchor:middle}
.pdf{font:italic bold 10px "Open Sans",sans-serif;fill:#111;text-anchor:middle}
.tray{display:flex;align-items:center;margin-left:auto;padding-right:18px;font-size:12.5px}
.tray>svg:nth-child(2){margin-left:18px}
.tray>svg:nth-child(3){margin-left:16px}
.eng{margin:0 17px 0 20px}
.tray>svg:nth-child(6),.tray>svg:nth-child(7){margin-left:7px}
.clock{display:flex;flex-direction:column;align-items:flex-end;line-height:19px;margin:0 7px 0 15px;width:57px}
```
FILE: app.js
```js
const NS = 'http://www.w3.org/2000/svg';

// Adjust tracking so each label takes its designed width.
// Ligatures make the glyph count differ from the character count, so refine a few times.
document.querySelectorAll('.fit').forEach(el => {
  const want = +el.dataset.w;
  const n = el.textContent.length;
  let ls = 0;
  for (let i = 0; i < 4; i++) {
    ls += (want - el.getBoundingClientRect().width) / n;
    el.style.letterSpacing = ls.toFixed(3) + 'px';
  }
});

// Page thumbnails: y:x-end, prefix h = heading, b = indented, in thirds of a pixel.
const pages = [
  'h42:355 56 65 74 89 99 107:392 h122:338 135 147 156 165:490 179 188:450 203 213 225 234:405 249 258:480 h272:352 284 293:510 b308:502 b317:425 b327 b335:387',
  'b40 b51 b61 b70 b79:380 93 102:438 h117:336 130 138 147 160:512 b172 b181 b191 b201 b211:460 b220 b229 b240 b250:490 b259 b270 b280:490 b289 b299 b310 b319:498',
  'h43:358 b55 b64 b73:390 b84 b94 b103:360 b115 b124:345 b134 b145:408 b154 b163:435 b174 b184:340 b193:455 b205:395 b214:435 b223 b234:397 b244:405 b253:500 h265:308 280 289 299:450 313 322 332:513',
  '40 52:435 63 76:323 90 100 109 118:343 h133:313 145 157:473 169 180 190 199 208:467 224 235 244 253:415 h268:320 b277 b288:508 b298 b307 b319:333 b328 b337:408',
  'b40 b52 b61:378 h73:372 85 94 106:442 h121:320 133 142:372 157 167 176 187:473 199 210 220 229:325 h244:363 256 265 277:495 292 301 310:490 325 334 343:422',
  '43 52 64:437 h79:333 91 100 109 118:360 b133 b142 b151 b160:460 b172 b181:495 193 202 214 223 232 241 253:505 265 276 286:485 h301:328 313 322 331 343:400'
];
const thumbs = document.getElementById('thumbs');
pages.forEach((spec, i) => {
  let m = '';
  spec.split(' ').forEach((tok, k) => {
    const [, kind, y, end] = tok.match(/^([hb]?)(\d+):?(\d*)$/);
    const x1 = ((kind === 'b' ? 319 : 291) - 252) / 3;
    const x2 = ((end ? +end : 506 + (k * 7) % 12) - 252) / 3;
    const row = Math.round(y / 3) + .5;
    m += `<path d="M${x1} ${row}H${x2}" stroke="${kind === 'h' ? '#333' : '#85858c'}" stroke-dasharray="${5 + k % 3} .3 3 .3"/>`;
  });
  const d = document.createElement('div');
  d.className = 'th' + (i ? '' : ' cur');
  d.innerHTML = `<b>${i + 1}</b><svg width="102" height="131" viewBox="0 0 102 131">${m}</svg>`;
  thumbs.append(d);
});

// Rulers: sixteenths of an inch at the current zoom.
const inch = 211.2;
const line = (a, b, c, d) => `<path d="M${a} ${b}L${c} ${d}" stroke="#fff"/>`;
let h = line(2, 10.5, 12, 10.5) + line(6.5, 6, 6.5, 16);
h += line(18, 4.5, 220, 4.5) + line(18, 20.5, 220, 20.5);
h += '<path d="M215.500 3.500h9v3l-4 5.500 4 6v3.500h-9V18l4-6-4-5.500z" fill="#191919" stroke="#fff"/>';
h += '<path d="M617.500 16V4.500H1622M617.500 20.500H1622M617.500 13l4 4.500v4h-8v-4z" fill="none" stroke="#fff"/>';
const x0 = 219.5;
for (let k = -15; k <= 106; k++) {
  const x = Math.round(x0 + k * inch / 16) + .5;
  if (k === 0 || x < 20 || x > 1620) continue;
  if (k > 0 && k % 16 === 0) {
    h += `<text x="${x}" y="16" text-anchor="middle" font-size="10.500" fill="#fff">${k / 16}</text>` + line(x, 4, x, 6) + line(x, 19, x, 21);
  } else {
    const r = k % 8 === 0 ? 4 : k % 2 === 0 ? 2.5 : 1.5;
    h += line(x, 12 - r, x, 12 + r);
  }
  if (k === 8 || k === 16 || k === 24) h += line(x - 2.5, 21.5, x + 2.5, 21.5) + line(x, 18, x, 21);
}
document.getElementById('rh').innerHTML = h;

let v = '<path d="M1.500 0v227.500h15V0M1.500 859V259.500h15V859" fill="none" stroke="#fff"/>';
for (let k = -17; k < 48; k++) {
  const y = Math.round(227 + k * inch / 16) + .5;
  if (k === 0 || y < 2) continue;
  if (k % 16 === 0) {
    v += `<text transform="translate(12.500 ${y}) rotate(-90)" text-anchor="middle" font-size="10.500" fill="#fff">${Math.abs(k / 16)}</text>` + line(1, y, 3, y) + line(15, y, 17, y);
  } else {
    const r = k % 8 === 0 ? 4 : k % 2 === 0 ? 2.5 : 1.5;
    v += line(8.5 - r, y, 8.5 + r, y);
  }
}
document.getElementById('rv').innerHTML = v;
```
